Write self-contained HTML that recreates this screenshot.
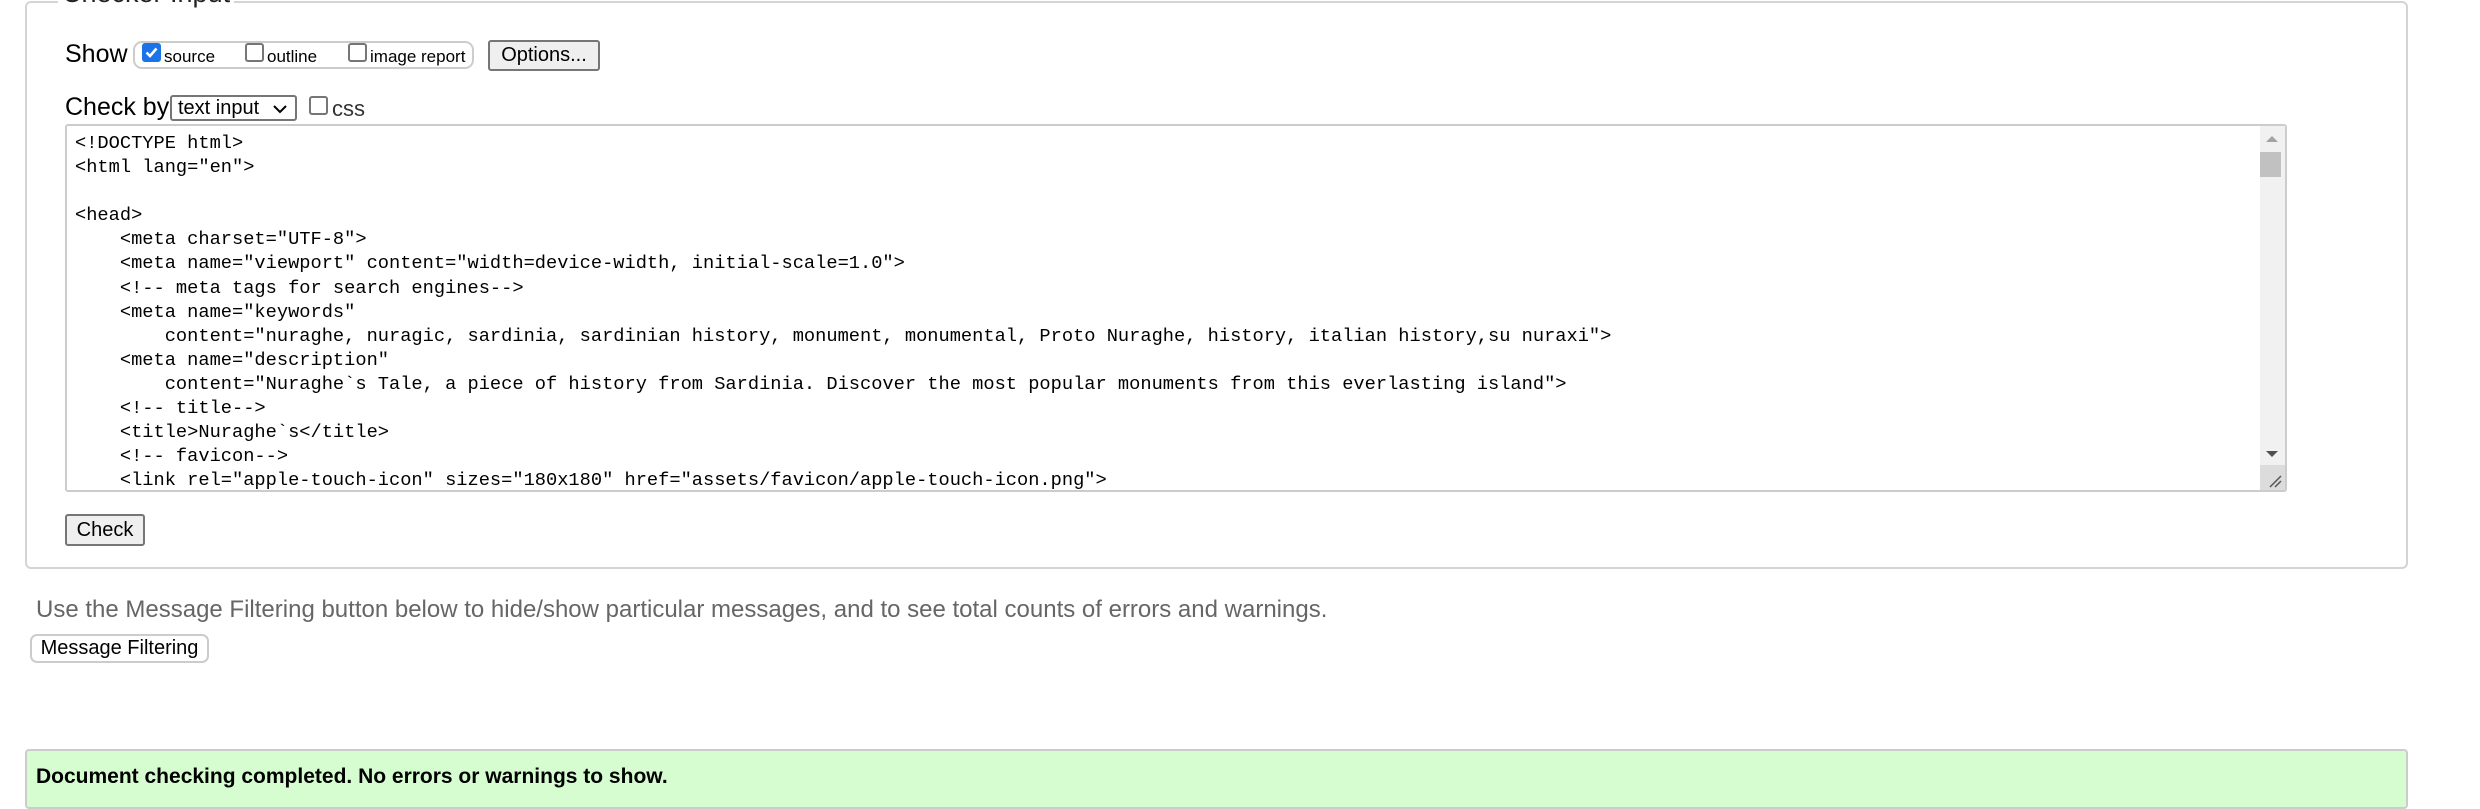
<!DOCTYPE html>
<html><head><meta charset="utf-8"><style>
*{box-sizing:border-box}
body{margin:0;width:2480px;height:794px;overflow:hidden;background:#fff;font-family:"Liberation Sans",Arial,sans-serif;position:relative;color:#000}
.abs{position:absolute}
.fs{left:25px;top:1px;width:2383px;height:568px;border:2px solid #d4d4d4;border-radius:6px}
.legend{left:58px;top:-22px;font-size:27px;background:#fff;padding:0 4px;color:#222;line-height:30px}
.cb{display:inline-block;width:19px;height:19px;border:2px solid #767676;border-radius:3px;background:#fff}
.cb.on{background:#1a73e8;border-color:#1a73e8}
.btn{background:#efefef;border:2px solid #767676;border-radius:3px;font-size:20px;text-align:center}
.ta{left:65px;top:124px;width:2222px;height:368px;border:2px solid #ccc;border-radius:3px;overflow:hidden}
pre{margin:0;position:absolute;left:8px;top:5px;font-family:"Liberation Mono",monospace;font-size:18.7px;line-height:24.1px;color:#000}
</style></head><body>
<div class="abs fs"></div>
<div class="abs legend">Checker Input</div>

<div class="abs" style="left:65px;top:40px;font-size:25px">Show</div>
<div class="abs" style="left:133px;top:41px;width:341px;height:28px;border:2px solid #ccc;border-radius:9px"></div>
<div class="abs cb on" style="left:142px;top:43px"><svg width="15" height="15" viewBox="0 0 15 15" style="display:block"><path d="M2.5 7.5 L6 11 L12.5 3.5" stroke="#fff" stroke-width="2.6" fill="none"/></svg></div>
<div class="abs" style="left:164px;top:47px;font-size:17px">source</div>
<div class="abs cb" style="left:245px;top:43px"></div>
<div class="abs" style="left:267px;top:47px;font-size:17px">outline</div>
<div class="abs cb" style="left:348px;top:43px"></div>
<div class="abs" style="left:370px;top:47px;font-size:17px">image report</div>
<div class="abs btn" style="left:488px;top:40px;width:112px;height:31px;line-height:27px">Options...</div>

<div class="abs" style="left:65px;top:93px;font-size:25px">Check by</div>
<div class="abs" style="left:170px;top:95px;width:127px;height:26px;border:2px solid #767676;border-radius:3px;font-size:20px;line-height:22px;padding-left:6px">text input<svg width="14" height="9" viewBox="0 0 14 9" style="position:absolute;right:8px;top:8px"><path d="M1 1 L7 7 L13 1" stroke="#000" stroke-width="2" fill="none"/></svg></div>
<div class="abs cb" style="left:309px;top:96px"></div>
<div class="abs" style="left:332px;top:96px;font-size:22px;color:#333">css</div>

<div class="abs ta"><pre>&lt;!DOCTYPE html&gt;
&lt;html lang="en"&gt;

&lt;head&gt;
    &lt;meta charset="UTF-8"&gt;
    &lt;meta name="viewport" content="width=device-width, initial-scale=1.0"&gt;
    &lt;!-- meta tags for search engines--&gt;
    &lt;meta name="keywords"
        content="nuraghe, nuragic, sardinia, sardinian history, monument, monumental, Proto Nuraghe, history, italian history,su nuraxi"&gt;
    &lt;meta name="description"
        content="Nuraghe`s Tale, a piece of history from Sardinia. Discover the most popular monuments from this everlasting island"&gt;
    &lt;!-- title--&gt;
    &lt;title&gt;Nuraghe`s&lt;/title&gt;
    &lt;!-- favicon--&gt;
    &lt;link rel="apple-touch-icon" sizes="180x180" href="assets/favicon/apple-touch-icon.png"&gt;</pre>
<div class="abs" style="right:0;top:0;width:25px;height:366px;background:#f1f1f1"></div>
<div class="abs" style="right:0;bottom:0;width:25px;height:25px;background:#dcdcdc"></div>
<svg class="abs" style="right:3px;bottom:2px" width="14" height="14" viewBox="0 0 14 14"><path d="M2 13 L13 2 M7 13 L13 7" stroke="#555" stroke-width="1.5"/></svg>
<div class="abs" style="right:4px;top:26px;width:21px;height:25px;background:#c1c1c1"></div>
<svg class="abs" style="right:7px;top:10px" width="12" height="6"><path d="M0 6 L6 0 L12 6Z" fill="#a3a3a3"/></svg>
<svg class="abs" style="right:7px;top:325px" width="12" height="6"><path d="M0 0 L6 6 L12 0Z" fill="#505050"/></svg>
</div>

<div class="abs btn" style="left:65px;top:514px;width:80px;height:32px;line-height:28px">Check</div>

<div class="abs" style="left:36px;top:596px;font-size:24px;color:#666">Use the Message Filtering button below to hide/show particular messages, and to see total counts of errors and warnings.</div>
<div class="abs" style="left:30px;top:634px;width:179px;height:29px;border:2px solid #ccc;border-radius:7px;font-size:20px;line-height:25px;text-align:center">Message Filtering</div>

<div class="abs" style="left:25px;top:749px;width:2383px;height:60px;background:#d5fdd0;border:2px solid #ccc;border-radius:4px"></div>
<div class="abs" style="left:36px;top:765px;font-size:21px;font-weight:bold">Document checking completed. No errors or warnings to show.</div>
</body></html>
